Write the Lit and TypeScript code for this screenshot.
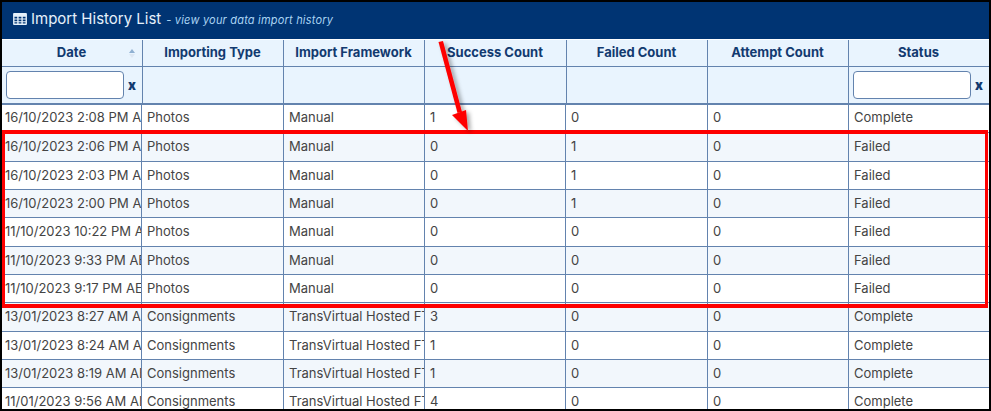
import { LitElement, html, css } from 'lit';
import { customElement } from 'lit/decorators.js';

const HEADS = ['Date', 'Importing Type', 'Import Framework', 'Success Count', 'Failed Count', 'Attempt Count', 'Status'];

const ROWS = [
    ['16/10/2023 2:08 PM AEDT', 'Photos', 'Manual', '1', '0', '0', 'Complete'],
    ['16/10/2023 2:06 PM AEDT', 'Photos', 'Manual', '0', '1', '0', 'Failed'],
    ['16/10/2023 2:03 PM AEDT', 'Photos', 'Manual', '0', '1', '0', 'Failed'],
    ['16/10/2023 2:00 PM AEDT', 'Photos', 'Manual', '0', '1', '0', 'Failed'],
    ['11/10/2023 10:22 PM AEDT', 'Photos', 'Manual', '0', '0', '0', 'Failed'],
    ['11/10/2023 9:33 PM AEDT', 'Photos', 'Manual', '0', '0', '0', 'Failed'],
    ['11/10/2023 9:17 PM AEDT', 'Photos', 'Manual', '0', '0', '0', 'Failed'],
    ['13/01/2023 8:27 AM AEDT', 'Consignments', 'TransVirtual Hosted FTP', '3', '0', '0', 'Complete'],
    ['13/01/2023 8:24 AM AEDT', 'Consignments', 'TransVirtual Hosted FTP', '1', '0', '0', 'Complete'],
    ['13/01/2023 8:19 AM AEDT', 'Consignments', 'TransVirtual Hosted FTP', '1', '0', '0', 'Complete'],
    ['11/01/2023 9:56 AM AEDT', 'Consignments', 'TransVirtual Hosted FTP', '4', '0', '0', 'Complete'],
];

@customElement('app-root')
export class AppRoot extends LitElement {
    static styles = css`
        :host {
            display: block;
            position: relative;
            height: 411px;
            box-sizing: border-box;
            overflow: hidden;
            background: #fff;
            border: 2px solid #000;
            font-family: Inter, 'Liberation Sans', sans-serif;
            font-size: 13px;
            color: #444;
        }
        .title {
            display: flex;
            align-items: center;
            gap: 4px;
            height: 37px;
            padding: 0 0 4px 11px;
            box-sizing: border-box;
            background: #003473;
            color: #e6f1fb;
            font-size: 15px;
            white-space: nowrap;
        }
        .title svg {
            display: block;
            flex: none;
        }
        .title em {
            margin-left: 1px;
            padding-top: 2px;
            font-size: 11px;
            color: #a9d3f2;
            letter-spacing: 0.2px;
        }
        .head {
            display: grid;
            grid-template-columns: 141px 141px 141px 142px 141px 141px 1fr;
            margin-top: 1px;
            background: #e9f4fe;
            color: #123a70;
            font-weight: 700;
        }
        .head > div {
            box-sizing: border-box;
            border-right: 1px solid #6383ae;
            border-bottom: 1px solid #6383ae;
        }
        .head > div:nth-child(7n) {
            border-right: 0;
        }
        .label {
            display: flex;
            align-items: center;
            justify-content: center;
            position: relative;
            height: 27px;
            padding: 0 1px 2px 0;
        }
        .sort {
            position: absolute;
            top: 9px;
            right: 7px;
            width: 0;
            height: 0;
            border: 3px solid transparent;
            border-top: 0;
            border-bottom: 4px solid #8fb0d2;
        }
        .sort::after {
            content: '';
            position: absolute;
            top: 5px;
            left: -3px;
            border: 3px solid transparent;
            border-bottom: 0;
            border-top: 4px solid #dde7f3;
        }
        .filter {
            height: 38px;
            display: flex;
            align-items: center;
            padding: 0 0 1px 4px;
            gap: 4px;
        }
        .head > div.filter {
            border-bottom-width: 2px;
        }
        .filter input {
            width: 118px;
            height: 28px;
            box-sizing: border-box;
            padding: 0;
            background: #fff;
            border: 1px solid #6383ae;
            border-radius: 4px;
        }
        .filter b {
            font-size: 13px;
        }
        .row {
            display: grid;
            grid-template-columns: 140px 142px 141px 141px 142px 141px 1fr;
            height: 28.33px;
            box-sizing: border-box;
            border-bottom: 1px solid #6383ae;
        }
        .row:nth-child(even) {
            background: #f2f7fc;
        }
        .row > div {
            box-sizing: border-box;
            padding: 0 0 0 5px;
            line-height: 27px;
            white-space: nowrap;
            overflow: hidden;
            border-right: 1px solid #6383ae;
        }
        .row:first-child > div {
            line-height: 25px;
        }
        .row > div:first-child {
            padding-left: 3px;
        }
        .row > div:last-child {
            border-right: 0;
        }
        .box {
            position: absolute;
            left: -1px;
            top: 128px;
            width: 987px;
            height: 177.7px;
            box-sizing: border-box;
            border: 4px solid #fe0000;
            border-right-width: 3px;
        }
        .arrow {
            position: absolute;
            left: 430px;
            top: 36px;
            overflow: visible;
        }
    `;

    renderFilter(on: boolean) {
        if (!on) return html`<div class="filter"></div>`;
        return html`<div class="filter"><input type="text" /><b>x</b></div>`;
    }

    render() {
        return html`
            <div class="title">
                <svg width="14" height="12" viewBox="0 0 15 13">
                    <path fill="#e6f1fb" fill-rule="evenodd" d="M1 0h13a1 1 0 0 1 1 1v11a1 1 0 0 1-1 1H1a1 1 0 0 1-1-1V1a1 1 0 0 1 1-1zM1.500 4v2h3V4zm4.500 0v2h3V4zm4.500 0v2h3V4zM1.500 7v2h3V7zm4.500 0v2h3V7zm4.500 0v2h3V7zM1.500 10v1.500h3V10zm4.500 0v1.500h3V10zm4.500 0v1.500h3V10z" />
                </svg>
                <span>Import History List</span>
                <em>- view your data import history</em>
            </div>
            <div class="head">
                ${HEADS.map((h, i) => html`<div class="label">${h}${i === 0 ? html`<span class="sort"></span>` : ''}</div>`)}
                ${HEADS.map((_, i) => this.renderFilter(i === 0 || i === 6))}
            </div>
            <div class="body">
                ${ROWS.map((r) => html`<div class="row">${r.map((c) => html`<div>${c}</div>`)}</div>`)}
            </div>
            <div class="box"></div>
            <svg class="arrow" width="50" height="100" viewBox="0 0 50 100">
                <defs>
                    <filter id="sh" x="-50%" y="-10%" width="200%" height="120%">
                        <feDropShadow dx="3" dy="2" stdDeviation="2" flood-color="#000" flood-opacity="0.35" />
                    </filter>
                </defs>
                <g filter="url(#sh)" fill="#fe0000">
                    <path d="M6.500 4 L11 3 L30 74 L25.500 75 Z" />
                    <path d="M20 77 L34 72 L36 93 Z" />
                </g>
            </svg>
        `;
    }
}
